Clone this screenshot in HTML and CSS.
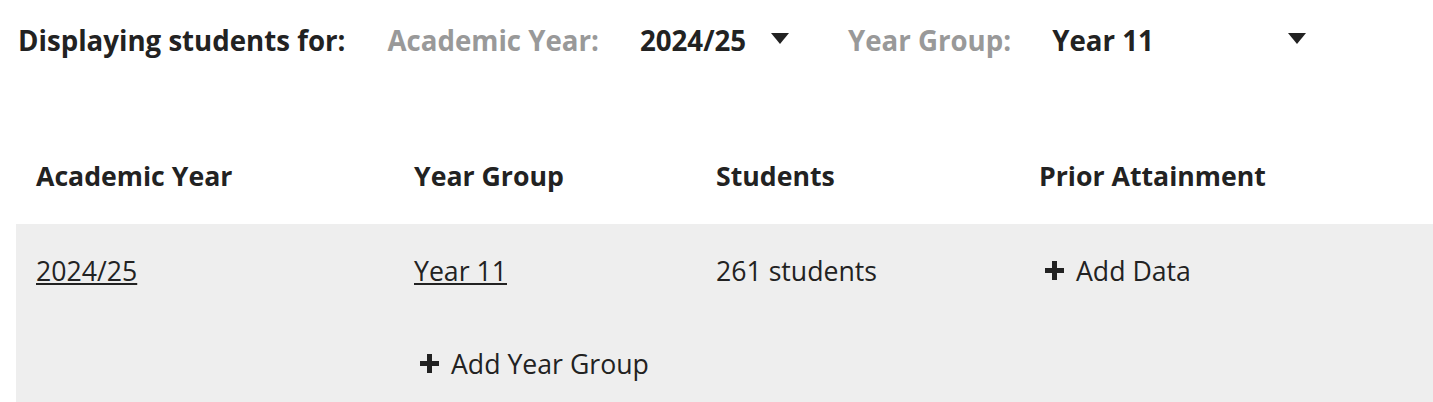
FILE: index.html
```html
<!DOCTYPE html>
<html lang="en">
<head>
    <meta charset="UTF-8">
    <title>Students</title>
    <link rel="stylesheet" href="styles.css">
</head>
<body>
    <!-- Filtros -->
    <div class="filters">
        <span class="filters-title">Displaying students for:</span>
        <span class="filter-label">Academic Year:</span>
        <div class="select select-year">
            <span>2024/25</span>
            <span class="caret"></span>
        </div>
        <span class="filter-label">Year Group:</span>
        <div class="select select-group">
            <span>Year 11</span>
            <span class="caret"></span>
        </div>
    </div>

    <!-- Tabela -->
    <table class="students-table">
        <thead>
            <tr>
                <th class="col-year">Academic Year</th>
                <th class="col-group">Year Group</th>
                <th class="col-students">Students</th>
                <th>Prior Attainment</th>
            </tr>
        </thead>
        <tbody>
            <tr>
                <td><a href="#">2024/25</a></td>
                <td><a href="#">Year 11</a></td>
                <td>261 students</td>
                <td><button class="add-btn"><span class="plus"></span>Add Data</button></td>
            </tr>
            <tr class="add-row">
                <td></td>
                <td colspan="3"><button class="add-btn"><span class="plus"></span>Add Year Group</button></td>
            </tr>
        </tbody>
    </table>
</body>
</html>
```

FILE: styles.css
```css
body {
    font-family: 'Open Sans', sans-serif;
    font-size: 26.67px;
    color: #222;
    margin: 0;
    padding: 0 0 0 16px;
}

.filters {
    display: flex;
    align-items: center;
    height: 80px;
    font-size: 27.65px;
    font-weight: 700;
}

.filters-title {
    margin-left: 2px;
    margin-right: 42px;
}

.filter-label {
    color: #999;
    margin-right: 41px;
}

.select {
    display: flex;
    align-items: center;
    justify-content: space-between;
}

.select-year {
    width: 149px;
    margin-right: 59px;
}

.select-group {
    width: 254px;
}

.caret {
    width: 0;
    height: 0;
    margin-top: -3px;
    border-left: 9.5px solid transparent;
    border-right: 9.5px solid transparent;
    border-top: 11px solid #222;
}

.students-table {
    margin-top: 48px;
    width: 1417px;
    border-collapse: collapse;
}

.students-table th {
    text-align: left;
    font-weight: 700;
    padding: 0 20px 2px;
    height: 94px;
}

.col-year {
    width: 338px;
}

.col-group {
    width: 262px;
}

.col-students {
    width: 283px;
}

.students-table tbody {
    background: #eee;
}

.students-table td {
    padding: 28px 20px 28px;
    vertical-align: top;
}

.add-row td {
    padding-top: 28px;
    padding-bottom: 40px;
}

.students-table a {
    color: #222;
}

.add-btn {
    font-family: inherit;
    font-size: inherit;
    color: #222;
    background: none;
    border: none;
    padding: 0 0 0 6px;
    display: flex;
    align-items: center;
    cursor: pointer;
}

.plus {
    position: relative;
    width: 19px;
    height: 19px;
    margin-right: 12px;
}

.plus::before,
.plus::after {
    content: '';
    position: absolute;
    background: #222;
}

.plus::before {
    left: 0;
    top: 7px;
    width: 19px;
    height: 5px;
}

.plus::after {
    left: 7px;
    top: 0;
    width: 5px;
    height: 19px;
}
```
